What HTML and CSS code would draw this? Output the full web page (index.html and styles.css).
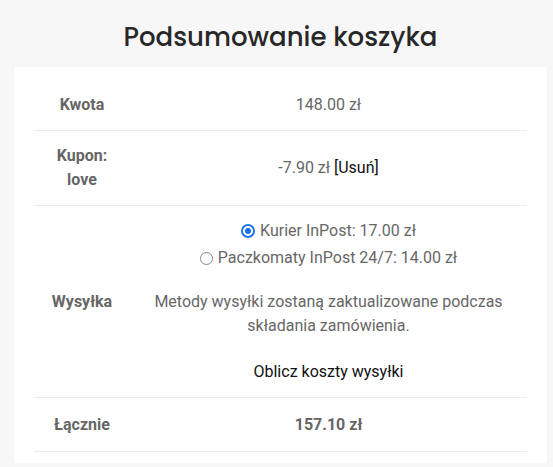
FILE: index.html
```html
<!DOCTYPE html>
<html lang="pl">
<head>
<meta charset="utf-8">
<link rel="stylesheet" href="styles.css">
</head>
<body>
<div class="cart-totals">
  <h2 class="title">Podsumowanie koszyka</h2>
  <div class="card">
    <table class="totals">
      <tr>
        <th>Kwota</th>
        <td>148.00 zł</td>
      </tr>
      <tr>
        <th>Kupon:<br>love</th>
        <td>-7.90 zł <a class="remove">[Usuń]</a></td>
      </tr>
      <tr>
        <th>Wysyłka</th>
        <td>
          <ul class="methods">
            <li><span class="radio checked"></span>Kurier InPost: 17.00 zł</li>
            <li><span class="radio"></span>Paczkomaty InPost 24/7: 14.00 zł</li>
          </ul>
          <p class="note">Metody wysyłki zostaną zaktualizowane podczas składania zamówienia.</p>
          <p class="calc">Oblicz koszty wysyłki</p>
        </td>
      </tr>
      <tr class="total">
        <th>Łącznie</th>
        <td><strong>157.10 zł</strong></td>
      </tr>
    </table>
  </div>
</div>
</body>
</html>
```
FILE: styles.css
```css
html, body {
  margin: 0;
  padding: 0;
  background: #f7f7f7;
}
body {
  font-family: Roboto, "Liberation Sans", sans-serif;
  font-size: 16px;
  color: #676767;
}
.cart-totals {
  padding: 0 6px 0 14px;
}
.title {
  margin: 0;
  padding-top: 19px;
  height: 67px;
  box-sizing: border-box;
  font-family: "Poppins", "Open Sans", sans-serif;
  font-weight: 500;
  font-size: 26px;
  line-height: 36px;
  color: #272727;
  text-align: center;
}
.card {
  background: #fff;
  padding: 13px 20px 11px;
}
.totals {
  width: 100%;
  border-collapse: collapse;
}
.totals tr {
  border-bottom: 1px solid #ebebeb;
}
.totals th,
.totals td {
  padding: 13px 0;
  line-height: 24px;
  text-align: center;
  vertical-align: middle;
}
.totals th {
  width: 96px;
  font-weight: 700;
  color: #666;
}
.totals .total th,
.totals .total td {
  padding: 15px 0 14px;
}
.totals strong {
  font-weight: 700;
  color: #666;
}
.remove {
  color: #111;
}
.methods {
  list-style: none;
  margin: 0 0 20px;
  padding: 0;
}
.methods li {
  display: flex;
  align-items: center;
  justify-content: center;
  gap: 5px;
}
.methods li + li {
  margin-top: 3px;
}
.radio {
  width: 13px;
  height: 13px;
  border-radius: 50%;
  border: 1.5px solid #8a8790;
  box-sizing: border-box;
  background: #fff;
}
.radio.checked {
  width: 14px;
  height: 14px;
  border: 2px solid #1f75e8;
  background: radial-gradient(circle, #1f75e8 0 2.8px, #fff 3.3px);
}
.note {
  margin: 0 0 22px;
}
.calc {
  margin: 0;
  color: #111;
}
```
